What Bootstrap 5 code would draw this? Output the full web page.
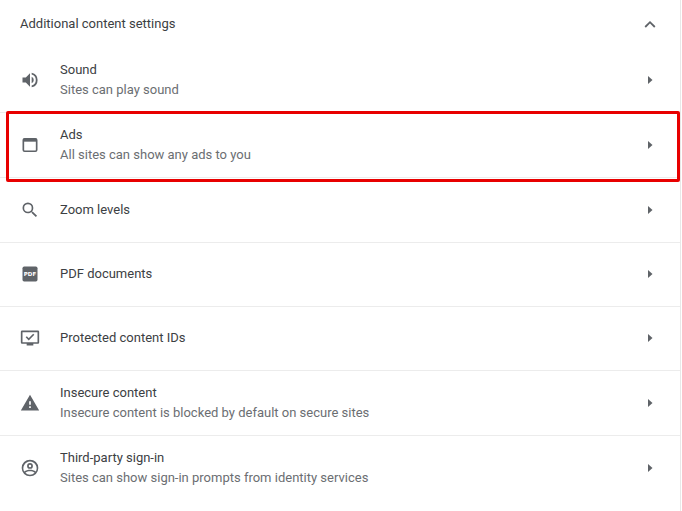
<!DOCTYPE html>
<html lang="en"><head><meta charset="utf-8">
<link href="https://cdn.jsdelivr.net/npm/bootstrap@5.3.0/dist/css/bootstrap.min.css" rel="stylesheet">
<style>
html,body{height:511px;overflow:hidden;background:#fff}
body{font-family:Roboto,"Liberation Sans",sans-serif;font-size:13px;line-height:20px;color:#3c4043}
.panel-wrap{width:681px;height:511px;border-right:1px solid #e8e8e8;position:relative}
.head-row{height:47px;padding:0 20px}
.set-row{height:65px;padding:0 24px 0 20px;border-top:1px solid #ececec}
.set-row.first{border-top:0}
.set-row.slim{height:64px;padding-bottom:2px}
.ico-box{width:20px;height:20px;margin-right:20px;flex:none}
.sub-text{color:#6b6e72}
.caret-box{width:10px;height:10px;flex:none;margin-right:1px}
.chev-box{width:12px;height:8px;flex:none}
.hl-frame{position:absolute;left:6px;top:111px;width:674px;height:71px;border:3px solid #e80000;border-radius:2px;pointer-events:none}
.pdf-label{font-family:"DejaVu Sans",sans-serif;font-size:6.6px;font-weight:700;fill:#fff}
svg{display:block}
</style></head><body>
<div class="panel-wrap">
<div class="head-row d-flex align-items-center justify-content-between"><span>Additional content settings</span>
<svg class="chev-box me-1" viewBox="0 0 12 8"><path d="M1.2 7 6 2.200 10.800 7" fill="none" stroke="#5f6368" stroke-width="1.800"/></svg></div>

<div class="set-row first d-flex align-items-center">
<svg class="ico-box" viewBox="0 0 24 24" fill="#5f6368"><path d="M3 9v6h4l5 5V4L7 9H3zm13.500 3A4.500 4.500 0 0 0 14 8v8a4.500 4.500 0 0 0 2.500-4zM14 3.200v2.100a7 7 0 0 1 0 13.400v2.100a9 9 0 0 0 0-17.600z"/></svg>
<div class="flex-grow-1"><div>Sound</div><div class="sub-text">Sites can play sound</div></div>
<svg class="caret-box" viewBox="0 0 10 10"><path d="M3 1l4.500 4L3 9z" fill="#5f6368"/></svg></div>

<div class="set-row d-flex align-items-center">
<svg class="ico-box" viewBox="0 0 24 24"><rect x="4" y="4.500" width="16" height="15" rx="1.500" fill="none" stroke="#5f6368" stroke-width="2"/><rect x="4" y="4.500" width="16" height="3.500" fill="#5f6368"/></svg>
<div class="flex-grow-1"><div>Ads</div><div class="sub-text">All sites can show any ads to you</div></div>
<svg class="caret-box" viewBox="0 0 10 10"><path d="M3 1l4.500 4L3 9z" fill="#5f6368"/></svg></div>

<div class="set-row d-flex align-items-center">
<svg class="ico-box" viewBox="0 0 24 24" fill="#5f6368"><path d="M15.500 14h-.79l-.28-.27A6.470 6.470 0 0 0 16 9.500 6.500 6.500 0 1 0 9.500 16c1.610 0 3.090-.59 4.230-1.570l.27.28v.79l5 4.990L20.490 19l-4.990-5zm-6 0A4.500 4.500 0 1 1 14 9.500 4.490 4.490 0 0 1 9.500 14z"/></svg>
<div class="flex-grow-1">Zoom levels</div>
<svg class="caret-box" viewBox="0 0 10 10"><path d="M3 1l4.500 4L3 9z" fill="#5f6368"/></svg></div>

<div class="set-row slim d-flex align-items-center">
<svg class="ico-box" viewBox="0 0 24 24"><rect x="3" y="3" width="18" height="18" rx="2" fill="#5f6368"/><text class="pdf-label" x="12" y="14.500" text-anchor="middle">PDF</text></svg>
<div class="flex-grow-1">PDF documents</div>
<svg class="caret-box" viewBox="0 0 10 10"><path d="M3 1l4.500 4L3 9z" fill="#5f6368"/></svg></div>

<div class="set-row slim d-flex align-items-center">
<svg class="ico-box" viewBox="0 0 24 24" fill="#5f6368"><path d="M21.500 3h-19A1.500 1.500 0 0 0 1 4.500v13A1.500 1.500 0 0 0 2.500 19H8v2h8v-2h5.500a1.500 1.500 0 0 0 1.500-1.500v-13A1.500 1.500 0 0 0 21.500 3zM21 17H3V5h18v12z"/><path d="M7.500 10.500l3 3 6-6" fill="none" stroke="#5f6368" stroke-width="2"/></svg>
<div class="flex-grow-1">Protected content IDs</div>
<svg class="caret-box" viewBox="0 0 10 10"><path d="M3 1l4.500 4L3 9z" fill="#5f6368"/></svg></div>

<div class="set-row d-flex align-items-center">
<svg class="ico-box" viewBox="0 0 24 24" fill="#5f6368"><path d="M1 21h22L12 2 1 21zm12-3h-2v-2h2v2zm0-4h-2v-4h2v4z"/></svg>
<div class="flex-grow-1"><div>Insecure content</div><div class="sub-text">Insecure content is blocked by default on secure sites</div></div>
<svg class="caret-box" viewBox="0 0 10 10"><path d="M3 1l4.500 4L3 9z" fill="#5f6368"/></svg></div>

<div class="set-row d-flex align-items-center">
<svg class="ico-box" viewBox="0 0 24 24" fill="#5f6368"><path d="M12 2a10 10 0 1 0 0 20 10 10 0 0 0 0-20zm0 18a8 8 0 0 1-5.600-2.300c1.600-1.100 3.600-1.700 5.600-1.700s4 .6 5.600 1.700A8 8 0 0 1 12 20zm7-3.800c-2-1.400-4.500-2.200-7-2.200s-5 .8-7 2.200A8 8 0 1 1 19 16.200z"/><path d="M12 6a3.500 3.500 0 1 0 0 7 3.500 3.500 0 0 0 0-7zm0 5a1.500 1.500 0 1 1 0-3 1.500 1.500 0 0 1 0 3z"/></svg>
<div class="flex-grow-1"><div>Third-party sign-in</div><div class="sub-text">Sites can show sign-in prompts from identity services</div></div>
<svg class="caret-box" viewBox="0 0 10 10"><path d="M3 1l4.500 4L3 9z" fill="#5f6368"/></svg></div>
<div class="hl-frame"></div>
</div>
<script src="https://cdn.jsdelivr.net/npm/bootstrap@5.3.0/dist/js/bootstrap.bundle.min.js"></script>
</body></html>
